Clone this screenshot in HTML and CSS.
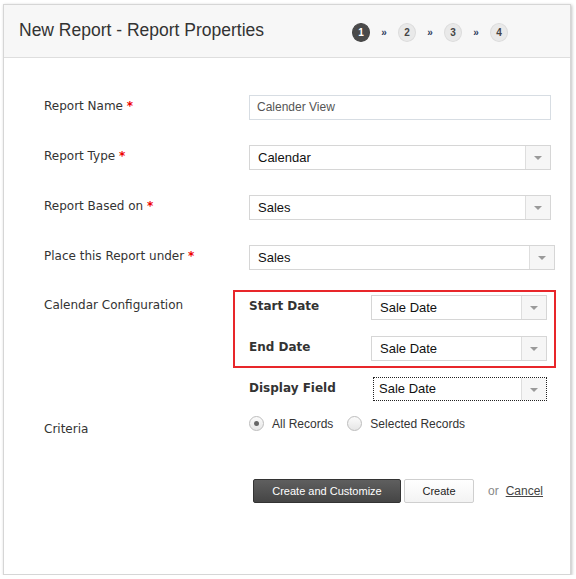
FILE: index.html
```html
<!DOCTYPE html>
<html>
<head>
<meta charset="utf-8">
<link rel="stylesheet" href="styles.css">
</head>
<body>
<div class="panel">
  <div class="header">
    <h1 class="title">New Report - Report Properties</h1>
    <div class="steps">
      <span class="step active">1</span><span class="sep">»</span>
      <span class="step">2</span><span class="sep">»</span>
      <span class="step">3</span><span class="sep">»</span>
      <span class="step">4</span>
    </div>
  </div>
  <div class="form">
    <div class="row">
      <div class="label">Report Name <span class="req">*</span></div>
      <div class="field"><div class="input">Calender View</div></div>
    </div>
    <div class="row">
      <div class="label">Report Type <span class="req">*</span></div>
      <div class="field"><div class="select"><span class="val">Calendar</span><span class="arrow"></span></div></div>
    </div>
    <div class="row">
      <div class="label">Report Based on <span class="req">*</span></div>
      <div class="field"><div class="select"><span class="val">Sales</span><span class="arrow"></span></div></div>
    </div>
    <div class="row">
      <div class="label">Place this Report under <span class="req">*</span></div>
      <div class="field"><div class="select wide"><span class="val">Sales</span><span class="arrow"></span></div></div>
    </div>
    <div class="row config-row">
      <div class="label config-label">Calendar Configuration</div>
      <div class="field">
        <div class="config-box">
          <div class="sub-row">
            <div class="sub-label">Start Date</div>
            <div class="select small"><span class="val">Sale Date</span><span class="arrow"></span></div>
          </div>
          <div class="sub-row">
            <div class="sub-label">End Date</div>
            <div class="select small"><span class="val">Sale Date</span><span class="arrow"></span></div>
          </div>
        </div>
        <div class="sub-row display-row">
          <div class="sub-label">Display Field</div>
          <div class="select small focused"><span class="val">Sale Date</span><span class="arrow"></span></div>
        </div>
      </div>
    </div>
    <div class="row criteria-row">
      <div class="label criteria-label">Criteria</div>
      <div class="field radios">
        <span class="radio checked"></span><span class="radio-text">All Records</span>
        <span class="radio"></span><span class="radio-text">Selected Records</span>
      </div>
    </div>
    <div class="actions">
      <span class="btn btn-dark">Create and Customize</span>
      <span class="btn btn-light">Create</span>
      <span class="or">or</span>
      <a class="cancel">Cancel</a>
    </div>
  </div>
</div>
</body>
</html>
```
FILE: styles.css
```css
html, body {
  margin: 0;
  padding: 0;
  background: #fff;
}
body {
  padding: 4px 0 0 3px;
}
.panel {
  box-sizing: border-box;
  width: 568px;
  height: 571px;
  border: 1px solid #d6d6d6;
  box-shadow: 1px 1px 3px rgba(0,0,0,0.25);
  background: #fff;
}
.header {
  box-sizing: border-box;
  height: 53px;
  background: #f7f7f7;
  border-bottom: 1px solid #dedede;
  display: flex;
  align-items: center;
  padding-left: 15px;
}
.title {
  margin: 0;
  font-family: "Liberation Sans", Arial, sans-serif;
  font-weight: normal;
  font-size: 17.5px;
  color: #333;
  width: 333px;
  position: relative;
  top: -1px;
}
.steps {
  display: flex;
  align-items: center;
  font-family: "Liberation Sans", Arial, sans-serif;
  position: relative;
  top: 1px;
}
.step {
  box-sizing: border-box;
  width: 18px;
  height: 19px;
  border-radius: 50%;
  background: #e9e9e9;
  border: 1px solid #dcdcdc;
  color: #444;
  font-size: 10px;
  font-weight: bold;
  display: flex;
  align-items: center;
  justify-content: center;
}
.step.active {
  background: #4a4a4a;
  border-color: #444;
  color: #fff;
}
.sep {
  font-size: 10px;
  color: #2e3d5e;
  font-weight: bold;
  width: 28px;
  text-align: center;
}
.form {
  padding: 37px 0 0 40px;
}
.row {
  display: flex;
  align-items: flex-start;
  margin-bottom: 25px;
}
.label {
  width: 205px;
  flex: none;
  font-family: "DejaVu Sans", "Lucida Grande", sans-serif;
  font-size: 12px;
  line-height: 18px;
  color: #333;
  padding-top: 2px;
}
.req {
  color: #e00;
  font-weight: bold;
}
.field {
  flex: none;
}
.input {
  box-sizing: border-box;
  width: 302px;
  height: 25px;
  border: 1px solid #d7dde3;
  font-family: "Liberation Sans", Arial, sans-serif;
  font-size: 12px;
  color: #555;
  line-height: 23px;
  padding-left: 7px;
}
.select {
  box-sizing: border-box;
  width: 302px;
  height: 25px;
  border: 1px solid #d6d6d6;
  display: flex;
  flex: none;
  font-family: "Liberation Sans", Arial, sans-serif;
  font-size: 13px;
  color: #111;
}
.select.wide {
  width: 306px;
}
.select .val {
  flex: 1;
  line-height: 23px;
  padding-left: 8px;
}
.select .arrow {
  width: 24px;
  border-left: 1px solid #dedede;
  background: #f6f6f6;
  position: relative;
}
.select .arrow::after {
  content: "";
  position: absolute;
  left: 8px;
  top: 10px;
  border-left: 4px solid transparent;
  border-right: 4px solid transparent;
  border-top: 4px solid #9a9a9a;
}
.config-row {
  margin-top: -5px;
  margin-bottom: 15px;
}
.config-label {
  padding-top: 6px;
}
.config-box {
  margin-left: -16px;
  width: 323px;
  box-sizing: border-box;
  border: 2px solid #e8262a;
  padding: 3px 7px 5px 14px;
}
.sub-row {
  display: flex;
  align-items: flex-start;
}
.sub-row + .sub-row {
  margin-top: 16px;
}
.sub-label {
  width: 122px;
  flex: none;
  font-family: "DejaVu Sans", "Lucida Grande", sans-serif;
  font-weight: bold;
  font-size: 12px;
  color: #333;
  line-height: 18px;
  padding-top: 2px;
}
.select.small {
  width: 176px;
}
.display-row {
  margin-top: 9px;
}
.display-row .select {
  margin-left: 2px;
  width: 174px;
  height: 24px;
  border: 1px dotted #222;
}
.display-row .select .val {
  line-height: 22px;
  padding-left: 5px;
}
.criteria-label {
  padding-top: 4px;
}
.criteria-row {
  margin-bottom: 0;
  height: 63px;
}
.radios {
  display: flex;
  align-items: center;
  padding-top: 0px;
  font-family: "Liberation Sans", Arial, sans-serif;
  font-size: 12px;
  color: #333;
}
.radio {
  box-sizing: border-box;
  width: 15px;
  height: 15px;
  border-radius: 50%;
  border: 1px solid #bdbdbd;
  background: linear-gradient(#fbfbfb, #e6e6e6);
  position: relative;
  margin-right: 8px;
}
.radio.checked::after {
  content: "";
  position: absolute;
  left: 4px;
  top: 4px;
  width: 5px;
  height: 5px;
  border-radius: 50%;
  background: #666;
}
.radio-text {
  margin-right: 14px;
}
.actions {
  display: flex;
  align-items: center;
  padding-left: 209px;
  font-family: "Liberation Sans", Arial, sans-serif;
  font-size: 11px;
}
.btn {
  box-sizing: border-box;
  height: 24px;
  line-height: 22px;
  border-radius: 2px;
  text-align: center;
}
.btn-dark {
  width: 148px;
  background: linear-gradient(#5f5f5f, #454545);
  border: 1px solid #333;
  color: #fff;
}
.btn-light {
  width: 70px;
  margin-left: 3px;
  background: linear-gradient(#fff, #f3f3f3);
  border: 1px solid #cfcfcf;
  color: #222;
}
.or {
  margin-left: 14px;
  color: #888;
  font-size: 12px;
}
.cancel {
  margin-left: 7px;
  color: #444;
  font-size: 12px;
  text-decoration: underline;
}
```
